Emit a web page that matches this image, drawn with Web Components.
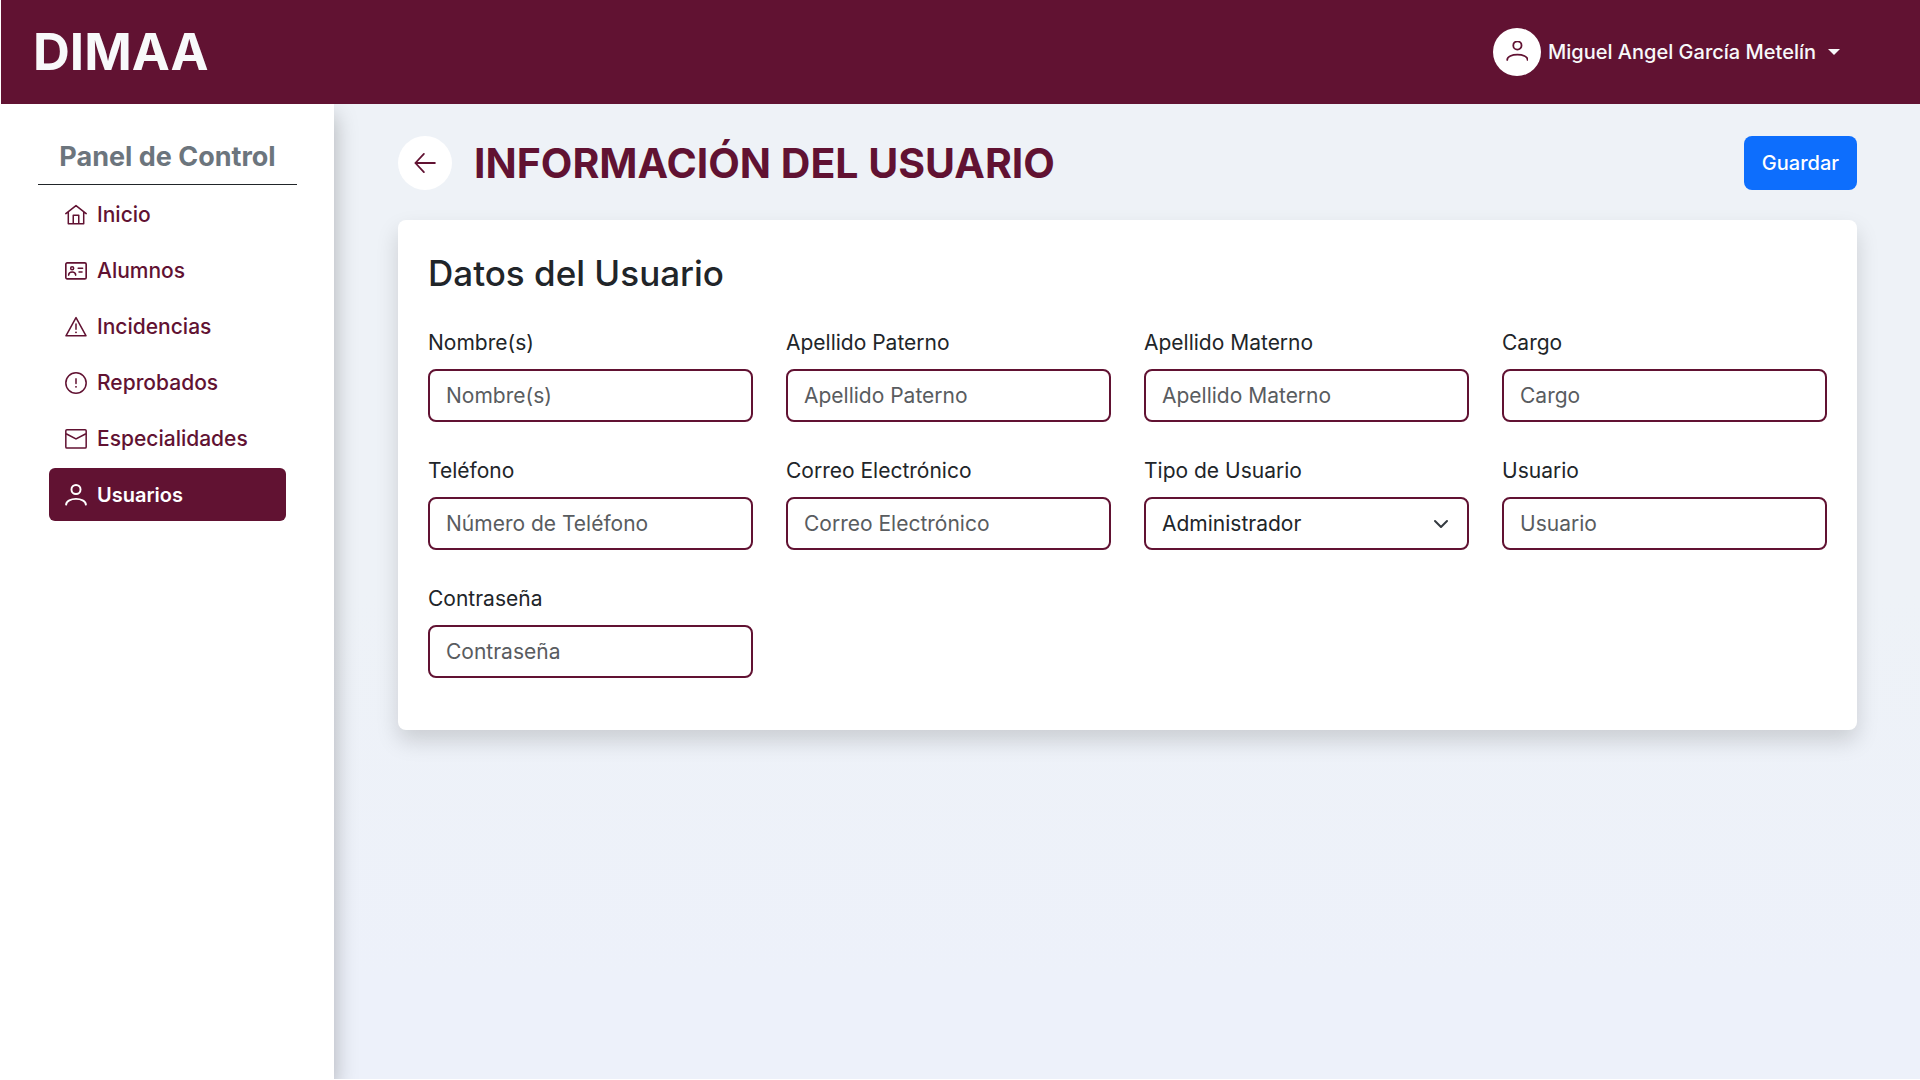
<!DOCTYPE html>
<html lang="es">
<head>
<meta charset="utf-8">
<meta name="viewport" content="width=device-width, initial-scale=1">
<title>DIMAA - Información del Usuario</title>
<style>
  :root {
    --wine: #611232;
    --ink: #212529;
    --muted: #6c757d;
    --control-height: 53px;
    --radius: 8px;
    --shadow: 0 11px 22px rgba(0, 0, 0, .15);
    --text: 21px;
    --text-strong: 20px;
  }
  * { box-sizing: border-box; }
  body {
    margin: 0;
    padding: 0 0 1px 1px;
    background: #fff;
    color: var(--ink);
    font: 400 var(--text)/32px Inter, "Liberation Sans", sans-serif;
  }
</style>
</head>
<body>
<dimaa-app>
  <dimaa-header slot="header" brand="DIMAA" user="Miguel Angel García Metelín"></dimaa-header>
  <dimaa-sidebar slot="sidebar" heading="Panel de Control">
    <nav-item icon="house">Inicio</nav-item>
    <nav-item icon="card">Alumnos</nav-item>
    <nav-item icon="triangle">Incidencias</nav-item>
    <nav-item icon="alert">Reprobados</nav-item>
    <nav-item icon="mail">Especialidades</nav-item>
    <nav-item icon="person" active>Usuarios</nav-item>
  </dimaa-sidebar>
  <page-title>Información del Usuario</page-title>
  <form-card>
    <span slot="heading">Datos del Usuario</span>
    <form-field label="Nombre(s)"></form-field>
    <form-field label="Apellido Paterno"></form-field>
    <form-field label="Apellido Materno"></form-field>
    <form-field label="Cargo"></form-field>
    <form-field label="Teléfono" hint="Número de Teléfono" type="tel"></form-field>
    <form-field label="Correo Electrónico" type="email"></form-field>
    <form-field label="Tipo de Usuario" options="Administrador"></form-field>
    <form-field label="Usuario"></form-field>
    <form-field label="Contraseña" type="password"></form-field>
  </form-card>
</dimaa-app>

<script>
const ICONS = {
  house: '<path d="M.6 7 8 1.2 15.4 7M2.4 5.8v8.6h11.2V5.8M6 14.4V8.2h4v6.2" fill="none" stroke="currentColor" stroke-width="1.1" stroke-linejoin="round" stroke-linecap="round"/>',
  card: '<rect x=".6" y="2.1" width="14.8" height="11.6" rx="1" fill="none" stroke="currentColor" stroke-width="1.2"/><circle cx="5.2" cy="6" r="1.1" fill="none" stroke="currentColor" stroke-width="1.1"/><path d="M2.6 11c.3-3 4.9-3 5.2 0M9.6 6h3.2M10.2 8.8h2.2" fill="none" stroke="currentColor" stroke-width="1.1" stroke-linecap="round"/>',
  triangle: '<path d="M8 1.2.7 14.4h14.6z" fill="none" stroke="currentColor" stroke-width="1.1" stroke-linejoin="round"/><path d="M8 5.8v3.8" stroke="currentColor" stroke-width="1.1" stroke-linecap="round"/><circle cx="8" cy="11.9" r=".7"/>',
  alert: '<circle cx="8" cy="8" r="7.4" fill="none" stroke="currentColor" stroke-width="1.1"/><path d="M8 5v3.4" stroke="currentColor" stroke-width="1.1" stroke-linecap="round"/><circle cx="8" cy="10.8" r=".7"/>',
  mail: '<rect x=".6" y="1.2" width="14.8" height="13.4" rx=".8" fill="none" stroke="currentColor" stroke-width="1.1"/><path d="M.8 4.2 8 8l7.2-3.8" fill="none" stroke="currentColor" stroke-width="1.1"/>',
  person: '<circle cx="8" cy="4" r="3.3" fill="none" stroke="currentColor" stroke-width="1.4"/><path d="M.8 15c.3-5.6 14.1-5.6 14.4 0" fill="none" stroke="currentColor" stroke-width="1.4" stroke-linecap="round"/>',
  user: '<circle cx="8.3" cy="3.2" r="3" fill="none" stroke="currentColor" stroke-width="1.3"/><path d="M.9 13.8c-.2-5.2 15-5.2 14.8 0" fill="none" stroke="currentColor" stroke-width="1.3" stroke-linecap="round"/>',
  back: '<path d="M15.2 8H1M7.2 1.4 1 8l6.2 6.6" fill="none" stroke="currentColor" stroke-width="1.3" stroke-linecap="round" stroke-linejoin="round"/>',
  chevron: '<path fill="none" stroke="currentColor" stroke-linecap="round" stroke-linejoin="round" stroke-width="2" d="m2 5 6 6 6-6"/>'
};
const icon = (name, size = 22) =>
  `<svg width="${size}" height="${size}" viewBox="0 0 16 16" fill="currentColor" aria-hidden="true">${ICONS[name]}</svg>`;
const BASE = '*{box-sizing:border-box} svg{display:block;flex:none} button,input,select{font:inherit;color:inherit;margin:0}';

class Base extends HTMLElement {
  connectedCallback() {
    if (this.shadowRoot) return;
    this.attachShadow({ mode: 'open' }).innerHTML = `<style>${BASE}${this.css()}</style>${this.html()}`;
  }
  attr(name) { return this.getAttribute(name) || ''; }
}

customElements.define('dimaa-app', class extends Base {
  css() { return `
    :host { display: flex; flex-direction: column; min-height: calc(100vh - 1px); }
    .body { flex: 1; display: flex; background: linear-gradient(#eef2f7 50%, #edf1fa 90%); }
    main { flex: 1; min-width: 0; padding: 32px 63px 32px 64px; display: flex; flex-direction: column; gap: 30px; }
  `; }
  html() { return `<slot name="header"></slot><div class="body"><slot name="sidebar"></slot><main><slot></slot></main></div>`; }
});

customElements.define('dimaa-header', class extends Base {
  css() { return `
    :host { display: flex; align-items: center; justify-content: space-between; height: 104px; padding: 0 80px 0 32px; background: var(--wine); color: #f8f9fa; }
    a { color: inherit; text-decoration: none; font-size: 51px; line-height: 64px; font-weight: 700; }
    button { display: flex; align-items: center; gap: 7px; padding: 0; border: 0; background: none; font-size: var(--text-strong); font-weight: 500; cursor: pointer; }
    .avatar { display: grid; place-items: center; width: 48px; height: 48px; border-radius: 50%; background: #fff; color: var(--wine); }
    .caret { margin-left: 5px; border: 6px solid transparent; border-top-color: currentColor; border-bottom: 0; }
  `; }
  html() { return `<a href="#">${this.attr('brand')}</a>
    <button type="button"><span class="avatar">${icon('user')}</span><span>${this.attr('user')}</span><span class="caret"></span></button>`; }
});

customElements.define('dimaa-sidebar', class extends Base {
  css() { return `
    :host { display: block; flex: none; width: 333px; padding: 33px 37px; background: #fff; box-shadow: 0 11px 22px rgba(0, 0, 0, .28); clip-path: inset(0 -40px 0 0); }
    h2 { margin: 0; padding-bottom: 7px; border-bottom: 1px solid var(--ink); color: var(--muted); font-size: 27px; line-height: 40px; font-weight: 700; text-align: center; white-space: nowrap; }
    nav { display: flex; flex-direction: column; gap: 3px; padding: 3px 11px; }
  `; }
  html() { return `<h2>${this.attr('heading')}</h2><nav><slot></slot></nav>`; }
});

customElements.define('nav-item', class extends Base {
  css() { return `
    :host { display: block; }
    a { display: flex; align-items: center; gap: 10px; height: var(--control-height); padding: 0 16px; border-radius: 6px; color: var(--wine); font-weight: 500; text-decoration: none; }
    :host([active]) a { background: var(--wine); color: #fff; font-size: var(--text-strong); font-weight: 600; }
  `; }
  html() { return `<a href="#">${icon(this.attr('icon'))}<span><slot></slot></span></a>`; }
});

customElements.define('page-title', class extends Base {
  css() { return `
    :host { display: flex; align-items: center; gap: 22px; }
    h1 { flex: 1; margin: 0; color: var(--wine); font-size: 41px; line-height: 54px; font-weight: 700; text-transform: uppercase; }
    button { height: 54px; border: 0; cursor: pointer; }
    .back { display: grid; place-items: center; width: 54px; padding: 0; border-radius: 50%; background: #fff; color: var(--wine); }
    .save { padding: 0 18px; border-radius: var(--radius); background: #0d6efd; color: #fff; font-size: var(--text-strong); font-weight: 500; }
  `; }
  html() { return `<button type="button" class="back" aria-label="Volver">${icon('back')}</button>
    <h1><slot></slot></h1><button type="button" class="save">Guardar</button>`; }
});

customElements.define('form-card', class extends Base {
  css() { return `
    :host { display: block; padding: 30px 30px 52px; border-radius: var(--radius); background: #fff; box-shadow: var(--shadow); }
    h2 { margin: 0 0 31px; font-size: 35px; line-height: 46px; font-weight: 500; }
    form { display: grid; grid-template-columns: repeat(4, minmax(0, 1fr)); gap: 33px; }
  `; }
  html() { return `<h2><slot name="heading"></slot></h2><form><slot></slot></form>`; }
});

customElements.define('form-field', class extends Base {
  css() { return `
    :host { display: block; }
    label { display: block; margin-bottom: 10px; }
    .box { position: relative; }
    input, select { display: block; width: 100%; height: var(--control-height); padding: 0 16px; border: 2px solid var(--wine); border-radius: var(--radius); background: #fff; outline: 0; appearance: none; }
    input::placeholder { color: #595c5f; opacity: 1; }
    .box svg { position: absolute; right: 20px; top: 50%; margin-top: -8px; color: #343a40; pointer-events: none; }
  `; }
  html() {
    const label = this.attr('label');
    const options = this.attr('options');
    const control = options
      ? `<select id="control">${options.split(',').map(o => `<option>${o}</option>`).join('')}</select>${icon('chevron', 16)}`
      : `<input id="control" type="${this.attr('type') || 'text'}" placeholder="${this.attr('hint') || label}">`;
    return `<label for="control">${label}</label><div class="box">${control}</div>`;
  }
});
</script>
</body>
</html>
